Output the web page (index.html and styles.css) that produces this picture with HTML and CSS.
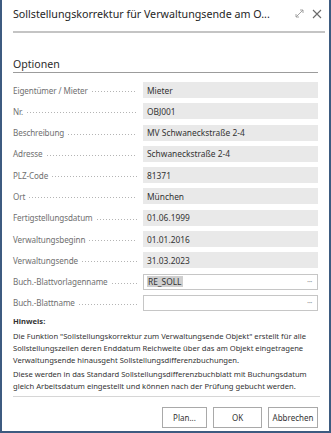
FILE: index.html
```html
<!DOCTYPE html>
<html lang="de">
<head>
<meta charset="utf-8">
<link rel="stylesheet" href="styles.css">
</head>
<body>
<div class="dialog">
  <div class="header">
    <div class="title">Sollstellungskorrektur für Verwaltungsende am O...</div>
    <div class="header-icons">
      <svg class="icon-expand" width="9" height="9" viewBox="0 0 9 9"><path d="M1 8 L8 1 M5 1 H8 V4 M1 5 V8 H4" fill="none" stroke="#9a9a9a" stroke-width="0.9"/></svg>
      <svg class="icon-close" width="10" height="10" viewBox="0 0 10 10"><path d="M1 1 L9 9 M9 1 L1 9" fill="none" stroke="#6a6a6a" stroke-width="1.1"/></svg>
    </div>
  </div>
  <div class="content">
    <div class="section-title">Optionen</div>
    <div class="fields">
      <div class="row"><div class="label"><span>Eigentümer / Mieter</span><i class="leader"></i></div><div class="value">Mieter</div></div>
      <div class="row"><div class="label"><span>Nr.</span><i class="leader"></i></div><div class="value">OBJ001</div></div>
      <div class="row"><div class="label"><span>Beschreibung</span><i class="leader"></i></div><div class="value">MV Schwaneckstraße 2-4</div></div>
      <div class="row"><div class="label"><span>Adresse</span><i class="leader"></i></div><div class="value">Schwaneckstraße 2-4</div></div>
      <div class="row"><div class="label"><span>PLZ-Code</span><i class="leader"></i></div><div class="value">81371</div></div>
      <div class="row"><div class="label"><span>Ort</span><i class="leader"></i></div><div class="value">München</div></div>
      <div class="row"><div class="label"><span>Fertigstellungsdatum</span><i class="leader"></i></div><div class="value">01.06.1999</div></div>
      <div class="row"><div class="label"><span>Verwaltungsbeginn</span><i class="leader"></i></div><div class="value">01.01.2016</div></div>
      <div class="row"><div class="label"><span>Verwaltungsende</span><i class="leader"></i></div><div class="value">31.03.2023</div></div>
      <div class="row"><div class="label"><span>Buch.-Blattvorlagenname</span><i class="leader"></i></div><div class="input"><span class="sel">RE_SOLL</span><span class="dots">···</span></div></div>
      <div class="row"><div class="label"><span>Buch.-Blattname</span><i class="leader"></i></div><div class="input"><span></span><span class="dots">···</span></div></div>
    </div>
    <div class="note">
      <div class="note-title">Hinweis:</div>
      <p>Die Funktion "Sollstellungskorrektur zum Verwaltungsende Objekt" erstellt für alle Sollstellungszeilen deren Enddatum Reichweite über das am Objekt eingetragene Verwaltungsende hinausgeht Sollstellungsdifferenzbuchungen.</p>
      <p>Diese werden in das Standard Sollstellungsdifferenzbuchblatt mit Buchungsdatum gleich Arbeitsdatum eingestellt und können nach der Prüfung gebucht werden.</p>
    </div>
  </div>
  <div class="footer">
    <button class="btn btn-plan">Plan...</button>
    <button class="btn btn-ok">OK</button>
    <button class="btn btn-cancel">Abbrechen</button>
  </div>
</div>
</body>
</html>
```
FILE: styles.css
```css
* { box-sizing: border-box; }
html, body { margin: 0; padding: 0; background: #ffffff; }
body { font-family: "Noto Sans", "Open Sans", sans-serif; color: #333; }

.dialog {
  width: 331px;
  height: 433px;
  background: #fff;
  border-left: 2px solid #3d5b80;
  border-right: 2px solid #3d5b80;
  border-bottom: 2px solid #3d5b80;
  display: flex;
  flex-direction: column;
}

.header {
  display: flex;
  align-items: center;
  justify-content: space-between;
  height: 33px;
  margin: 0 4px 0 11px;
  padding-bottom: 4px;
  border-bottom: 2px solid #c4c4c4;
}
.title {
  font-size: 10.7px;
  color: #262626;
  white-space: nowrap;
}
.header-icons { display: flex; align-items: center; gap: 8px; padding-right: 3px; }

.content { padding: 0 11px; flex: 1; }

.section-title {
  margin-top: 25px;
  font-size: 10.6px;
  color: #2c2c2c;
  padding-bottom: 1px;
  border-bottom: 1px solid #9c9c9c;
  line-height: 13px;
}

.fields {
  margin-top: 9px;
  display: flex;
  flex-direction: column;
  gap: 5.3px;
}
.row {
  display: flex;
  align-items: center;
  height: 16px;
}
.label {
  width: 130px;
  display: flex;
  align-items: center;
  font-size: 8.1px;
  letter-spacing: -0.1px;
  color: #707070;
  padding-right: 6px;
  white-space: nowrap;
}
.leader {
  flex: 1;
  height: 1px;
  margin-left: 4px;
  margin-top: 3px;
  background-image: linear-gradient(to right, #b4b4b4 1px, transparent 1px);
  background-size: 3px 1px;
  background-repeat: repeat-x;
}
.value {
  flex: 1;
  height: 16px;
  background: #e9e9e9;
  font-size: 8.4px;
  color: #333;
  padding-left: 4px;
  display: flex;
  align-items: center;
}
.input {
  flex: 1;
  height: 16px;
  border: 1px solid #c6c6c6;
  background: #fff;
  font-size: 8.4px;
  color: #333;
  padding: 0 5px 0 3px;
  display: flex;
  align-items: center;
  justify-content: space-between;
}
.sel { background: #cfcfcf; padding: 0 1px; }
.dots { color: #9a9a9a; font-size: 8px; letter-spacing: -0.5px; }

.note { margin-top: 4px; font-size: 7.6px; color: #333; line-height: 12px; }
.note-title { font-weight: bold; margin-bottom: 3px; }
.note p { margin: 0 0 2px 0; }

.footer {
  margin: 0 9px 0 11px;
  border-top: 1px solid #d6d6d6;
  display: flex;
  justify-content: flex-end;
  gap: 6px;
  padding: 10px 2px 3px 0;
}
.btn {
  height: 21px;
  background: #fff;
  border: 1px solid #a9a9a9;
  font-family: "Noto Sans", "Open Sans", sans-serif;
  font-size: 8px;
  color: #333;
  padding: 0;
}
.btn-plan { width: 45px; }
.btn-ok { width: 49px; }
.btn-cancel { width: 50px; }
```
